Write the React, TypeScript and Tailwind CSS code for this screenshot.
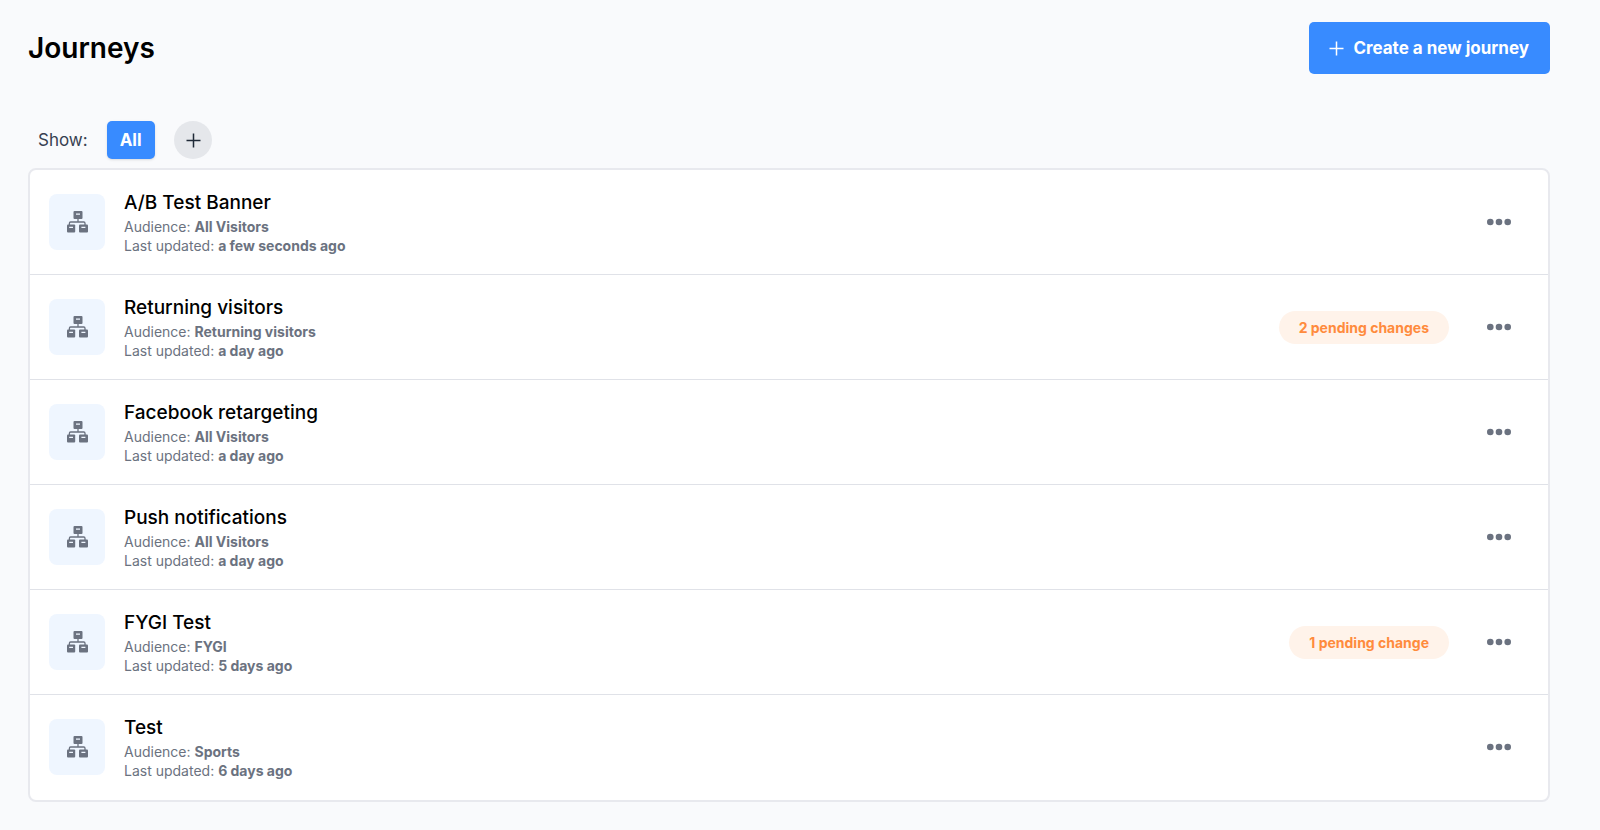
type Journey = {
  name: string;
  audience: string;
  updated: string;
  pending?: string;
};

const journeys: Journey[] = [
  { name: "A/B Test Banner", audience: "All Visitors", updated: "a few seconds ago" },
  { name: "Returning visitors", audience: "Returning visitors", updated: "a day ago", pending: "2 pending changes" },
  { name: "Facebook retargeting", audience: "All Visitors", updated: "a day ago" },
  { name: "Push notifications", audience: "All Visitors", updated: "a day ago" },
  { name: "FYGI Test", audience: "FYGI", updated: "5 days ago", pending: "1 pending change" },
  { name: "Test", audience: "Sports", updated: "6 days ago" },
];

function PlusIcon() {
  return (
    <svg className="size-4" viewBox="0 0 16 16" fill="none" stroke="currentColor" strokeWidth="1.5" aria-hidden="true">
      <path d="M8.5 1.5v14M1.5 8.5h14" />
    </svg>
  );
}

function FlowIcon() {
  return (
    <svg className="size-[22px]" viewBox="0 0 22 22" fill="none" stroke="currentColor" aria-hidden="true">
      <path strokeWidth="1.3" d="M12 8v3M3.4 14v-1.8c0-.7.5-1.2 1.2-1.2h13.2c.7 0 1.2.5 1.2 1.2V14" />
      <rect x="7.5" y="0" width="9" height="8" rx="1" fill="currentColor" stroke="none" />
      <rect x="1" y="13.4" width="8.2" height="8" rx="1" fill="currentColor" stroke="none" />
      <rect x="13" y="13.4" width="9" height="8" rx="1" fill="currentColor" stroke="none" />
      <path className="stroke-[#eff6ff]" strokeWidth="1.3" d="M10 3.2h4M3.2 16.4h3.8M15.4 16.4h4" />
    </svg>
  );
}

function DotsIcon() {
  return (
    <svg className="h-2 w-6" viewBox="0 0 24 8" fill="currentColor" aria-hidden="true">
      <circle cx="3.3" cy="4" r="3.3" />
      <circle cx="12" cy="4" r="3.3" />
      <circle cx="20.7" cy="4" r="3.3" />
    </svg>
  );
}

function JourneyRow({ journey }: { journey: Journey }) {
  return (
    <li className="flex items-center border-b border-[#e0e2e8] py-6 pr-[37px] pl-[19px] last:border-transparent">
      <div className="flex size-14 shrink-0 items-center justify-center rounded-lg bg-[#eff6ff] text-[#6b7280]">
        <FlowIcon />
      </div>
      <div className="-my-6 ml-[19px] grow text-sm leading-[19px] text-[#6b7280]">
        <h2 className="text-[19px] leading-7 font-medium text-black">{journey.name}</h2>
        <p>
          Audience: <strong>{journey.audience}</strong>
        </p>
        <p>
          Last updated: <strong>{journey.updated}</strong>
        </p>
      </div>
      {journey.pending && (
        <span className="mr-[38px] rounded-full bg-[#fff3ea] px-5 py-[7px] text-sm leading-[19px] font-bold text-[#ff8b3d]">
          {journey.pending}
        </span>
      )}
      <button type="button" aria-label={`Options for ${journey.name}`} className="text-[#6b7280]">
        <DotsIcon />
      </button>
    </li>
  );
}

export default function App() {
  return (
    <main className="min-h-screen bg-[#f9fafc] pt-[22px] pr-[50px] pb-7 pl-7 font-['Inter',sans-serif]">
      <header className="flex items-center justify-between">
        <h1 className="text-[28px] leading-8 font-semibold text-black">Journeys</h1>
        <button
          type="button"
          className="flex items-center gap-[9px] rounded-[5px] bg-[#388bff] py-[14px] pr-[21px] pl-[19px] text-[17px] leading-6 font-bold text-white"
        >
          <PlusIcon />
          Create a new journey
        </button>
      </header>

      <div className="mt-[47px] flex items-center px-[10px]">
        <span className="text-[17px] leading-6 text-[#374151]">Show:</span>
        <button
          type="button"
          className="ml-[19px] h-[38px] rounded-[5px] bg-[#388bff] px-[13px] text-[17px] leading-6 font-bold text-white shadow-sm"
        >
          All
        </button>
        <button
          type="button"
          aria-label="Add filter"
          className="ml-[19px] flex size-[38px] items-center justify-center rounded-full bg-[#e5e7eb] text-[#1f2937]"
        >
          <PlusIcon />
        </button>
      </div>

      <ul className="mt-[9px] rounded-lg border-2 border-[#e8e9ee] bg-white">
        {journeys.map((journey) => (
          <JourneyRow key={journey.name} journey={journey} />
        ))}
      </ul>
    </main>
  );
}
